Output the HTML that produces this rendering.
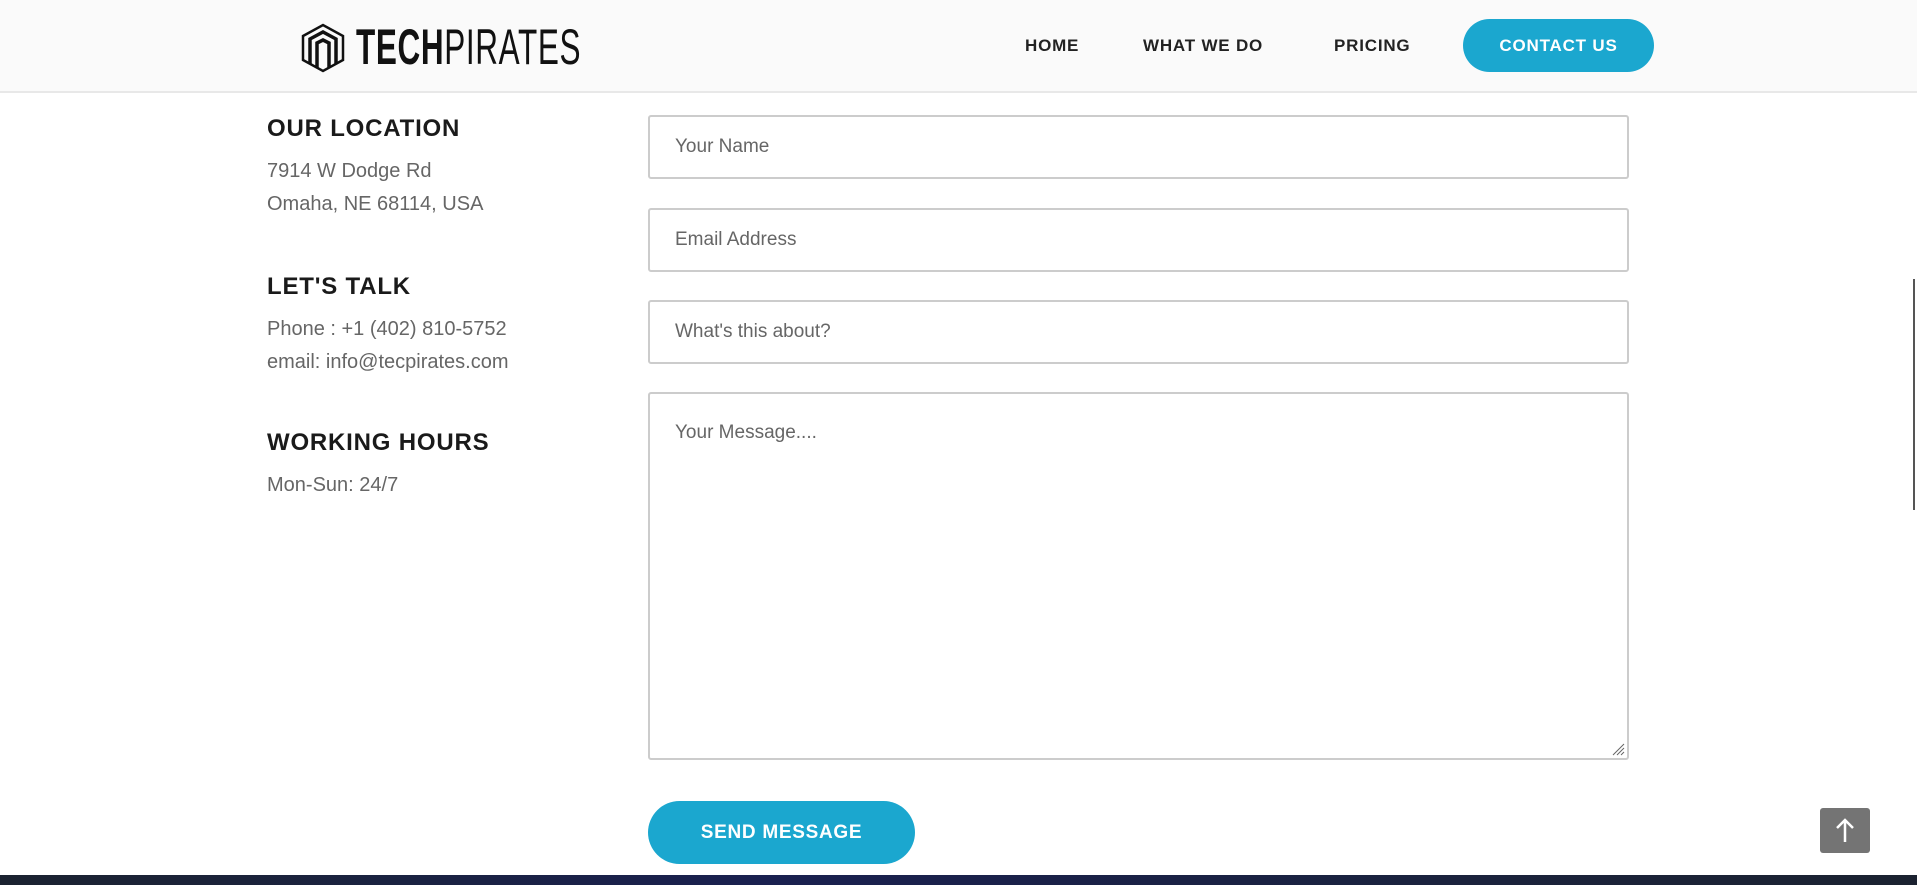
<!DOCTYPE html>
<html><head><meta charset="utf-8"><style>
*{margin:0;padding:0;box-sizing:border-box}
body{width:1917px;height:885px;overflow:hidden;background:#fff;font-family:"Liberation Sans",sans-serif;position:relative}
.hdr{position:absolute;left:0;top:0;width:1917px;height:93px;background:#fafafa;border-bottom:2px solid #e8e8e8}
.logo{position:absolute;left:300px;top:22px}
.lt{position:absolute;left:356px;top:20px;font-size:50px;line-height:54px;letter-spacing:1px;color:#111;transform:scaleX(.63);transform-origin:left}
.nav{position:absolute;top:36px;font-weight:bold;font-size:17px;color:#222;letter-spacing:.8px}
.cbtn{position:absolute;left:1463px;top:19px;width:191px;height:53px;border-radius:27px;background:#1ba7cf;color:#fff;font-weight:bold;font-size:17px;text-align:center;line-height:53px;letter-spacing:.8px}
h3{position:absolute;left:267px;font-size:24px;font-weight:bold;color:#1a1a1a;letter-spacing:.8px}
.p{position:absolute;left:267px;font-size:20px;color:#666;line-height:33px}
.in{position:absolute;left:648px;width:981px;border:2px solid #ccc;border-radius:3px;font-size:19px;color:#666;padding-left:25px}
.send{position:absolute;left:648px;top:801px;width:267px;height:63px;border-radius:32px;background:#1ba7cf;color:#fff;font-weight:bold;font-size:19px;text-align:center;line-height:63px;letter-spacing:.7px}
.foot{position:absolute;left:0;top:875px;width:1917px;height:10px;background:linear-gradient(90deg,#1b2230,#1a2150 40%,#1b2230)}
.top{position:absolute;left:1820px;top:808px;width:50px;height:45px;background:#747474;border-radius:3px}
</style></head><body>
<div class="hdr">
<svg class="logo" width="46" height="52" viewBox="0 0 46 52" fill="none" stroke="#111" stroke-width="3.5">
<path d="M3 14 L23 3 L43 14 L43 38 L23 49 L3 38 Z" stroke-width="2.5"/>
<path d="M10 42 V17 L23 10 L36 17 V42"/>
<path d="M17 46 V21 L23 18 L29 21 V46"/>
</svg>
<div class="lt"><b style="font-weight:bold">TECH</b>PIRATES</div>
<div class="nav" style="left:1025px">HOME</div>
<div class="nav" style="left:1143px">WHAT WE DO</div>
<div class="nav" style="left:1334px">PRICING</div>
<div class="cbtn">CONTACT US</div>
</div>
<h3 style="top:115px">OUR LOCATION</h3>
<div class="p" style="top:155px">7914 W Dodge Rd<br>Omaha, NE 68114, USA</div>
<h3 style="top:273px">LET'S TALK</h3>
<div class="p" style="top:313px">Phone : +1 (402) 810-5752<br>email: info@tecpirates.com</div>
<h3 style="top:429px">WORKING HOURS</h3>
<div class="p" style="top:469px">Mon-Sun: 24/7</div>
<div class="in" style="top:115px;height:64px;line-height:60px">Your Name</div>
<div class="in" style="top:208px;height:64px;line-height:60px">Email Address</div>
<div class="in" style="top:300px;height:64px;line-height:60px">What's this about?</div>
<div class="in" style="top:392px;height:368px;padding-top:28px">Your Message....
<svg style="position:absolute;right:2px;bottom:2px" width="14" height="14" stroke="#666"><path d="M13 2L2 13M13 6L6 13M13 10L10 13"/></svg></div>
<div class="send">SEND MESSAGE</div>
<div class="top"><svg width="50" height="45" fill="none" stroke="#fff" stroke-width="2.5"><path d="M25 34V12M17 20L25 12L33 20"/></svg></div>
<div style="position:absolute;left:1913px;top:279px;width:2px;height:231px;background:#555"></div>
<div class="foot"></div>
</body></html>
